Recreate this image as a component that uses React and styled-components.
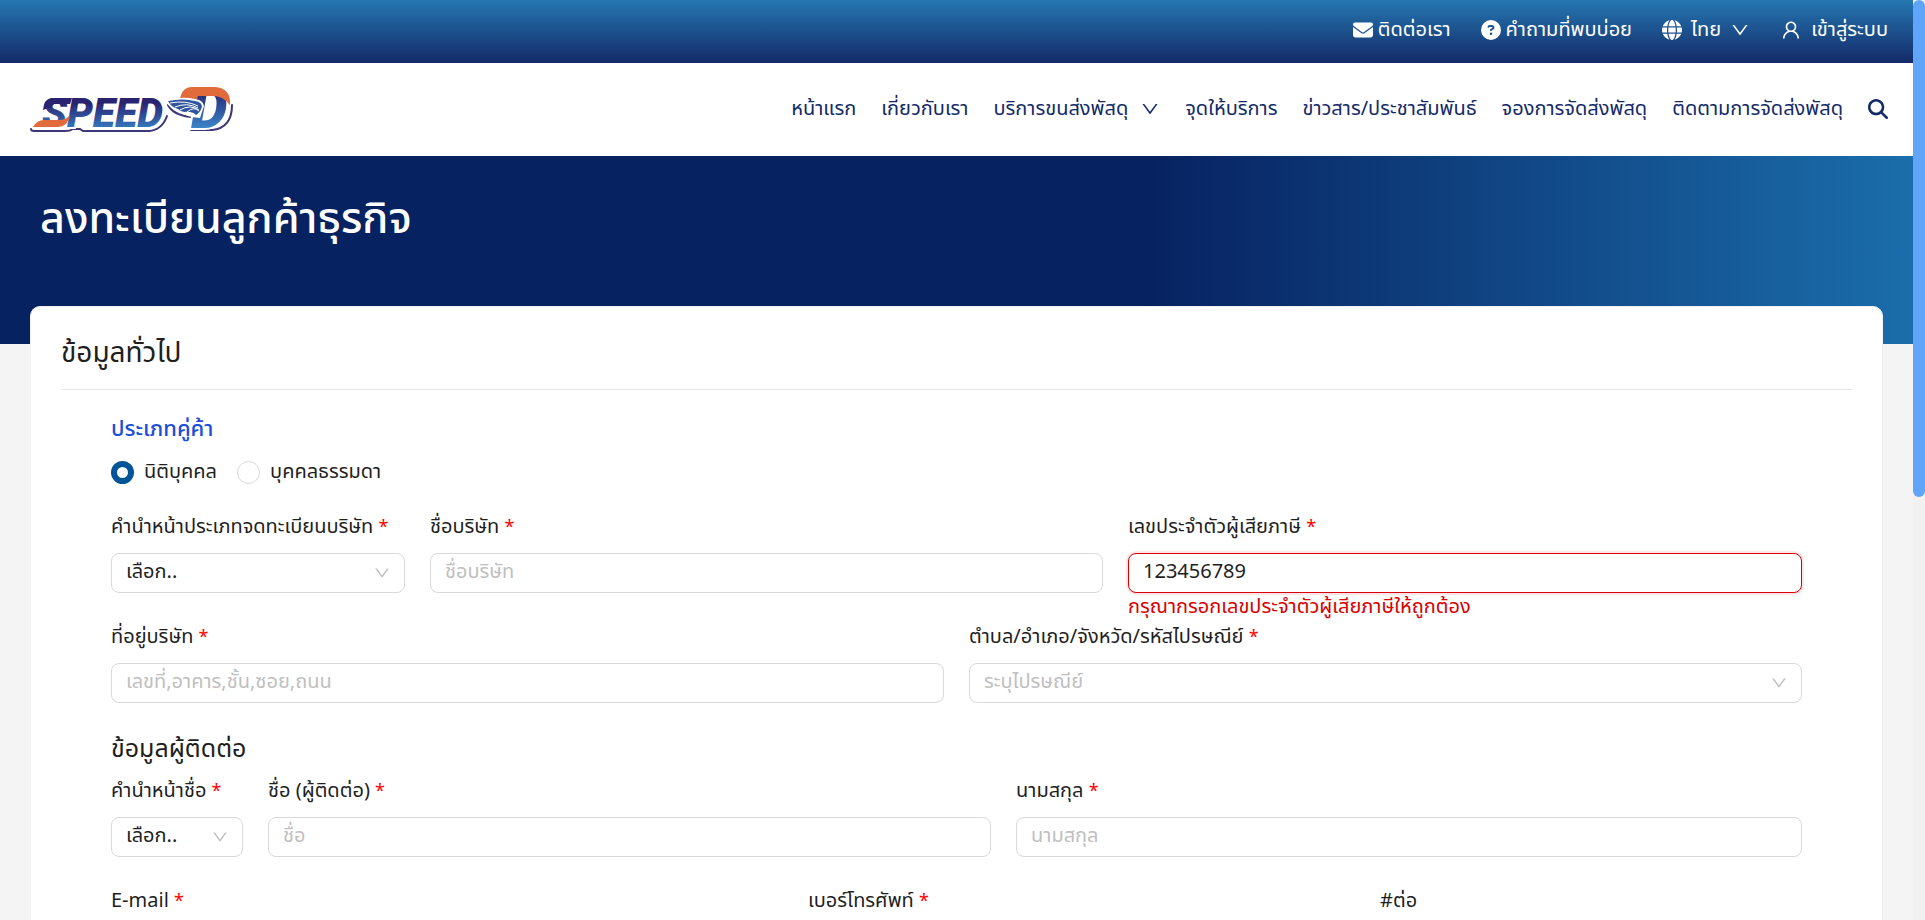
import React, { useState } from "react";
import styled, { createGlobalStyle } from "styled-components";
import { FaEnvelope, FaCircleQuestion, FaGlobe, FaMagnifyingGlass } from "react-icons/fa6";
import { AiOutlineDown, AiOutlineUser } from "react-icons/ai";

const GlobalStyle = createGlobalStyle`
  *, *::before, *::after { box-sizing: border-box; }
  body { margin: 0; background: #f4f4f4; }
  body, button, input, select {
    font-family: "Noto Sans Thai", "Noto Sans", "Open Sans", sans-serif;
    font-size: 20px;
    font-weight: 400;
    color: #1f1f1f;
  }
`;

const Shell = styled.div`
  display: flex;
  height: 100vh;
`;

const Page = styled.div`
  flex: 1;
  min-width: 0;
  overflow: hidden auto;
  scrollbar-width: none;
`;

const ScrollRail = styled.div`
  width: 12px;
  background: #f1f1f1;
`;

const ScrollThumb = styled.div`
  height: 54%;
  border-radius: 6px;
  background: #60a5fa;
`;

const TopBar = styled.div`
  display: flex;
  justify-content: flex-end;
  align-items: center;
  gap: 30px;
  height: 63px;
  padding: 0 25px 4px;
  background: linear-gradient(180deg, #2577b1, #132a68);
`;

const TopLink = styled.a`
  display: flex;
  align-items: center;
  gap: ${(p) => p.$gap || 5}px;
  color: #fff;
  line-height: 28px;
  white-space: nowrap;
  text-decoration: none;
`;

const Header = styled.header`
  display: flex;
  justify-content: space-between;
  align-items: center;
  height: 93px;
  padding: 0 25px 0 29px;
  background: #fff;
`;

const Nav = styled.nav`
  display: flex;
  align-items: center;
  gap: 25px;
  padding-bottom: 2px;
`;

const NavLink = styled.a`
  display: flex;
  align-items: center;
  gap: 12px;
  color: #132a68;
  line-height: 28px;
  white-space: nowrap;
  text-decoration: none;
`;

const SearchButton = styled.button`
  display: flex;
  padding: 0;
  border: 0;
  background: none;
  color: #132a68;
`;

const LogoWord = styled.text`
  font-family: Roboto, sans-serif;
  font-size: ${(p) => p.$size}px;
  font-style: italic;
  font-weight: 900;
  stroke: #fff;
  stroke-width: 4px;
  paint-order: stroke;
`;

const Hero = styled.div`
  height: 188px;
  padding: 34px 40px;
  background: linear-gradient(90deg, #072261 60%, #1b6dab 100%);
`;

const HeroTitle = styled.h1`
  margin: 0;
  color: #fff;
  font-size: 43px;
  font-weight: 500;
  line-height: 60px;
`;

const Card = styled.main`
  margin: -38px 30px 0;
  padding: 25px 30px 40px;
  border: 1px solid #f0f0f0;
  border-radius: 10px;
  background: #fff;
`;

const CardTitle = styled.h2`
  margin: 0;
  padding-bottom: 13px;
  border-bottom: 1px solid #e5e5e5;
  font-size: 28px;
  font-weight: 400;
  line-height: 44px;
`;

const Form = styled.form`
  padding: 24px 50px 0;
`;

const TypeGroup = styled.fieldset`
  margin: 0 0 27px;
  padding: 0;
  border: 0;
`;

const TypeLegend = styled.legend`
  padding: 0;
  color: #1d4ed8;
  font-size: 22px;
  font-weight: 500;
  line-height: 32px;
`;

const RadioRow = styled.div`
  display: flex;
  gap: 20px;
  padding-top: 12px;
`;

const RadioLabel = styled.label`
  display: flex;
  align-items: center;
  gap: 10px;
  line-height: 28px;
`;

const Radio = styled.input`
  appearance: none;
  width: 23px;
  height: 23px;
  margin: 0;
  border: 1px solid #d9d9d9;
  border-radius: 50%;
  background: #fff;

  &:checked {
    border: 6px solid #005596;
  }
`;

const Row = styled.div`
  display: grid;
  grid-template-columns: ${(p) => p.$columns};
  gap: 25px;
  min-height: 110px;
`;

const Label = styled.label`
  display: block;
  margin-bottom: 11px;
  line-height: 28px;
  white-space: nowrap;
`;

const Required = styled.span`
  color: #ff0000;
  font-size: 18px;
`;

const TextInput = styled.input`
  display: block;
  width: 100%;
  height: 40px;
  padding: 0 14px 2px;
  border: 1px solid ${(p) => (p.$invalid ? "#d90000" : "#d9d9d9")};
  border-radius: 8px;
  outline: 0;
  background: #fff;
  box-shadow: ${(p) => (p.$invalid ? "0 0 0 2px #ffe5e5" : "none")};

  &::placeholder {
    color: #bfbfbf;
    opacity: 1;
  }
`;

const SelectBox = styled.div`
  display: grid;
  align-items: center;

  > * {
    grid-area: 1 / 1;
  }

  svg {
    justify-self: end;
    margin-right: 14px;
    color: #bfbfbf;
    pointer-events: none;
  }
`;

const Select = styled.select`
  appearance: none;
  width: 100%;
  height: 40px;
  padding: 0 14px 2px;
  border: 1px solid #d9d9d9;
  border-radius: 8px;
  background: #fff;
  color: ${(p) => (p.$muted ? "#bfbfbf" : "#1f1f1f")};
`;

const ErrorText = styled.div`
  color: #d90000;
  line-height: 28px;
  white-space: nowrap;
`;

const SectionTitle = styled.h3`
  margin: 0 0 12px;
  font-size: 25px;
  font-weight: 400;
  line-height: 32px;
`;

function Field({ id, label, required = true, error, children }) {
  return (
    <div>
      <Label htmlFor={id}>
        {label} {required && <Required>*</Required>}
      </Label>
      {children}
      {error && <ErrorText id={`${id}-error`}>{error}</ErrorText>}
    </div>
  );
}

function Dropdown({ id, text, muted }) {
  return (
    <SelectBox>
      <Select id={id} $muted={muted}>
        <option>{text}</option>
      </Select>
      <AiOutlineDown size={18} />
    </SelectBox>
  );
}

function Logo() {
  return (
    <svg width="206" height="80" viewBox="0 -14 206 80" role="img" aria-label="SPEED-D">
      <defs>
        <linearGradient id="ink" x1="0" y1="0" x2="0" y2="1">
          <stop offset="0.3" stopColor="#2a2470" />
          <stop offset="0.8" stopColor="#3577bd" />
        </linearGradient>
        <linearGradient id="initialInk" x1="0" y1="0" x2="0" y2="1">
          <stop offset="0.3" stopColor="#2a2e7c" />
          <stop offset="0.8" stopColor="#3a86cb" />
        </linearGradient>
      </defs>
      <path d="M2 45 Q2 47 5 47 H36 Q41 47 44 45 H51 L54 47 H120 Q133 46 138 32" fill="none" stroke="#3b3779" strokeWidth="2" strokeLinecap="round" />
      <path d="M162 46 H183 Q203 44 203 21 M139 21 Q144 31 162 33" fill="none" stroke="#3b3779" strokeWidth="2" strokeLinecap="round" />
      <LogoWord x="13" y="43" $size={41} fill="url(#ink)">SPEED</LogoWord>
      <LogoWord x="162" y="44" $size={58} fill="url(#initialInk)">D</LogoWord>
      <path d="M22 14 H43 L41 20 H25 Q23 20 22 23 L14 26 Q15 15 22 14 Z" fill="#2a2470" />
      <path d="M4 43 Q8 36 15 36 H30 Q37 36 41 31 Q39 43 28 43 Z" fill="#e26b3c" />
      <path d="M151 15 Q153 3 163 3 H186 Q202 4 201 21 Q194 12 184 12 H169 L168 15 Z" fill="#e26b3c" />
      <path d="M136 16 Q154 12 166 15 Q174 16 175 22 L171 34 Q157 33 148 27 Q140 24 136 16 Z" fill="#fff" />
      <path d="M139 17 Q154 14 166 17 Q173 18 173 23 Q171 29 167 31 Q163 27 155 28 Q151 27 149 25 Q142 23 139 17 Z" fill="#31559f" />
      <path d="M141 19 Q157 16 169 22 M146 23 Q158 18 169 24 M151 26 Q161 20 170 26 M158 28 Q165 22 170 27" fill="none" stroke="#fff" strokeWidth="1" />
    </svg>
  );
}

export default function App() {
  const [kind, setKind] = useState("company");
  return (
    <Shell>
      <GlobalStyle />
      <Page>
        <TopBar>
          <TopLink href="#contact"><FaEnvelope size={20} />ติดต่อเรา</TopLink>
          <TopLink href="#faq"><FaCircleQuestion size={20} />คำถามที่พบบ่อย</TopLink>
          <TopLink href="#language" $gap={9}><FaGlobe size={20} />ไทย <AiOutlineDown size={20} /></TopLink>
          <TopLink href="#login" $gap={9}><AiOutlineUser size={22} />เข้าสู่ระบบ</TopLink>
        </TopBar>
        <Header>
          <Logo />
          <Nav>
            <NavLink href="#home">หน้าแรก</NavLink>
            <NavLink href="#about">เกี่ยวกับเรา</NavLink>
            <NavLink href="#services">บริการขนส่งพัสดุ <AiOutlineDown size={20} /></NavLink>
            <NavLink href="#points">จุดให้บริการ</NavLink>
            <NavLink href="#news">ข่าวสาร/ประชาสัมพันธ์</NavLink>
            <NavLink href="#booking">จองการจัดส่งพัสดุ</NavLink>
            <NavLink href="#tracking">ติดตามการจัดส่งพัสดุ</NavLink>
            <SearchButton type="button" aria-label="ค้นหา"><FaMagnifyingGlass size={20} /></SearchButton>
          </Nav>
        </Header>
        <Hero>
          <HeroTitle>ลงทะเบียนลูกค้าธุรกิจ</HeroTitle>
        </Hero>
        <Card>
          <CardTitle>ข้อมูลทั่วไป</CardTitle>
          <Form>
            <TypeGroup>
              <TypeLegend>ประเภทคู่ค้า</TypeLegend>
              <RadioRow>
                <RadioLabel>
                  <Radio type="radio" name="kind" checked={kind === "company"} onChange={() => setKind("company")} />
                  นิติบุคคล
                </RadioLabel>
                <RadioLabel>
                  <Radio type="radio" name="kind" checked={kind === "person"} onChange={() => setKind("person")} />
                  บุคคลธรรมดา
                </RadioLabel>
              </RadioRow>
            </TypeGroup>
            <Row $columns="294fr 673fr 674fr">
              <Field id="prefix" label="คำนำหน้าประเภทจดทะเบียนบริษัท"><Dropdown id="prefix" text="เลือก.." /></Field>
              <Field id="company" label="ชื่อบริษัท"><TextInput id="company" placeholder="ชื่อบริษัท" /></Field>
              <Field id="tax" label="เลขประจำตัวผู้เสียภาษี" error="กรุณากรอกเลขประจำตัวผู้เสียภาษีให้ถูกต้อง">
                <TextInput id="tax" defaultValue="123456789" $invalid aria-invalid="true" aria-describedby="tax-error" />
              </Field>
            </Row>
            <Row $columns="1fr 1fr">
              <Field id="address" label="ที่อยู่บริษัท"><TextInput id="address" placeholder="เลขที่,อาคาร,ชั้น,ซอย,ถนน" /></Field>
              <Field id="district" label="ตำบล/อำเภอ/จังหวัด/รหัสไปรษณีย์"><Dropdown id="district" text="ระบุไปรษณีย์" muted /></Field>
            </Row>
            <SectionTitle>ข้อมูลผู้ติดต่อ</SectionTitle>
            <Row $columns="132fr 723fr 786fr">
              <Field id="title" label="คำนำหน้าชื่อ"><Dropdown id="title" text="เลือก.." /></Field>
              <Field id="first" label="ชื่อ (ผู้ติดต่อ)"><TextInput id="first" placeholder="ชื่อ" /></Field>
              <Field id="last" label="นามสกุล"><TextInput id="last" placeholder="นามสกุล" /></Field>
            </Row>
            <Row $columns="672fr 547fr 422fr">
              <Field id="email" label="E-mail"><TextInput id="email" type="email" /></Field>
              <Field id="phone" label="เบอร์โทรศัพท์"><TextInput id="phone" type="tel" /></Field>
              <Field id="ext" label="#ต่อ" required={false}><TextInput id="ext" /></Field>
            </Row>
          </Form>
        </Card>
      </Page>
      <ScrollRail><ScrollThumb /></ScrollRail>
    </Shell>
  );
}
